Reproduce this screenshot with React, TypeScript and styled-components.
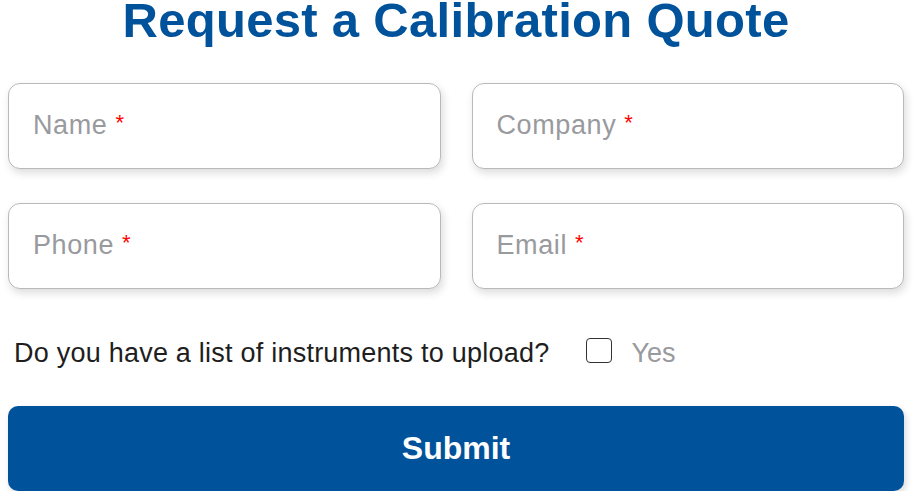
import React from 'react';
import styled, { createGlobalStyle } from 'styled-components';

const GlobalStyle = createGlobalStyle`
    body {
        margin: 0;
        background: #fff;
        font-family: "Liberation Sans", Arial, sans-serif;
    }
`;

const QuoteForm = styled.form`
    width: 896px;
    margin-left: 8px;
    display: flex;
    flex-direction: column;
`;

const Title = styled.h1`
    margin: 0;
    height: 83px;
    text-align: center;
    color: #00529b;
    font-size: 49px;
    font-weight: 700;
    line-height: 40px;
    letter-spacing: 0.3px;
`;

const FieldGrid = styled.div`
    display: grid;
    grid-template-columns: 1fr 1fr;
    column-gap: 31px;
    row-gap: 34px;
`;

const Field = styled.div`
    height: 86px;
    box-sizing: border-box;
    border: 1px solid #b9b9b9;
    border-radius: 12px;
    background: #fff;
    box-shadow: 2px 4px 8px rgba(0, 0, 0, 0.14);
    display: flex;
    align-items: center;
    padding: 0 0 2px 24px;
    font-size: 27px;
    letter-spacing: 0.6px;
    color: #999a9e;
`;

const Required = styled.span`
    color: #f00;
    font-size: 22px;
    margin-left: 8px;
    align-self: flex-start;
    margin-top: 26px;
`;

const UploadRow = styled.div`
    display: flex;
    align-items: center;
    height: 117px;
    padding-left: 6px;
    padding-top: 12px;
    box-sizing: border-box;
    font-size: 27px;
`;

const Question = styled.span`
    color: #1e1e1e;
    letter-spacing: 0.23px;
    margin-right: 37px;
`;

const Check = styled.span`
    width: 26px;
    height: 25px;
    box-sizing: border-box;
    border: 1.5px solid #333;
    border-radius: 4px;
    margin-top: -6px;
    margin-right: 19px;
`;

const CheckLabel = styled.span`
    color: #999a9e;
`;

const SubmitButton = styled.button`
    height: 85px;
    border: none;
    border-radius: 10px;
    background: #00529b;
    color: #fff;
    font-family: "Liberation Sans", Arial, sans-serif;
    font-size: 32px;
    font-weight: 700;
    box-shadow: 2px 3px 6px rgba(0, 0, 0, 0.15);
`;

const fields = ['Name', 'Company', 'Phone', 'Email'];

const App: React.FC = () => {
    return (
        <>
            <GlobalStyle />
            <QuoteForm onSubmit={(e) => e.preventDefault()}>
                <Title>Request a Calibration Quote</Title>
                <FieldGrid>
                    {fields.map((f) => (
                        <Field key={f}>
                            {f}
                            <Required>*</Required>
                        </Field>
                    ))}
                </FieldGrid>
                <UploadRow>
                    <Question>Do you have a list of instruments to upload?</Question>
                    <Check />
                    <CheckLabel>Yes</CheckLabel>
                </UploadRow>
                <SubmitButton type='submit'>Submit</SubmitButton>
            </QuoteForm>
        </>
    );
};

export default App;
